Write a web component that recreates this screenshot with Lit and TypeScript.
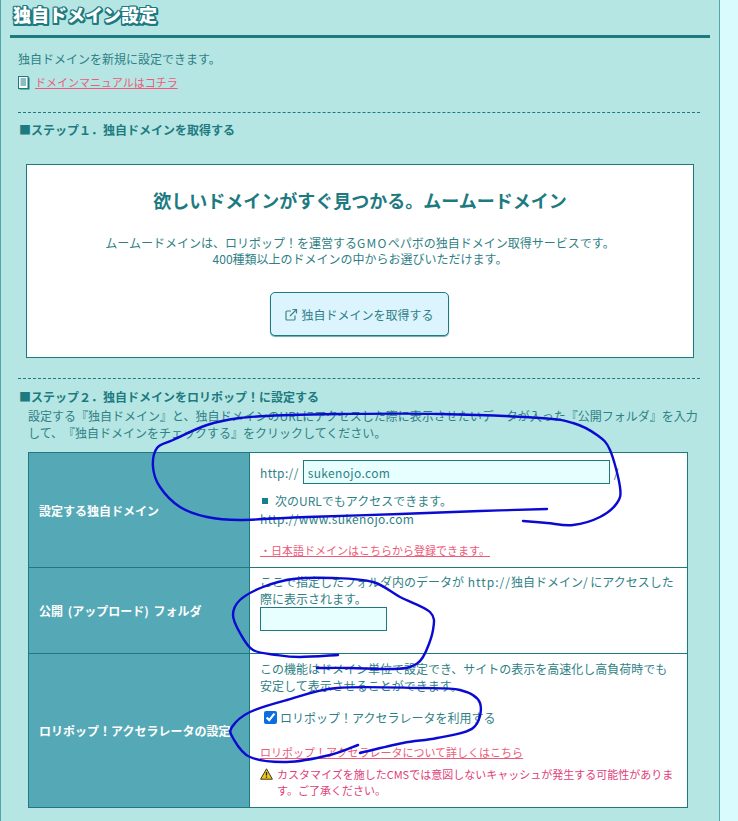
import { LitElement, html, css, svg } from "lit";
import { customElement } from "lit/decorators.js";

function smooth(p: number[][]): string {
  let d = `M${p[0][0]} ${p[0][1]}`;
  for (let i = 0; i < p.length - 1; i++) {
    const a = p[Math.max(i - 1, 0)], b = p[i], c = p[i + 1], e = p[Math.min(i + 2, p.length - 1)];
    const c1 = [b[0] + (c[0] - a[0]) / 6, b[1] + (c[1] - a[1]) / 6];
    const c2 = [c[0] - (e[0] - b[0]) / 6, c[1] - (e[1] - b[1]) / 6];
    d += ` C${c1[0].toFixed(1)} ${c1[1].toFixed(1)} ${c2[0].toFixed(1)} ${c2[1].toFixed(1)} ${c[0]} ${c[1]}`;
  }
  return d;
}

const scribbles: number[][][] = [
  [[547,509],[480,511],[400,514],[307,517],[240,520],[207,517],[180,507],[160,487],[153,467],[157,448],[173,440],[207,425],[240,418],[290,415],[340,414],[440,414],[540,418],[573,423],[597,435],[610,450],[620,487],[617,503],[600,517],[573,525],[547,523],[523,521]],
  [[338,655],[300,657],[277,655],[253,650],[240,633],[233,615],[240,600],[263,587],[293,579],[333,578],[373,582],[400,597],[430,612],[433,630],[423,657],[410,667],[390,669],[350,668],[317,668]],
  [[358,745],[330,755],[287,762],[250,757],[233,738],[232,727],[250,712],[287,700],[337,688],[420,688],[460,690],[480,703],[473,728],[437,738],[403,743],[360,753]],
];

@customElement("app-root")
export class AppRoot extends LitElement {
  static styles = css`
    :host { display: block; width: 738px; height: 821px; overflow: hidden; position: relative; background: #d9fbfd; font-family: "Noto Sans CJK JP", "Noto Sans", sans-serif; font-size: 12px; line-height: 17px; color: #2f7f86; text-spacing-trim: space-all; }
    a { color: #ee5a78; text-decoration: underline; font-size: 11px; }
    .panel { box-sizing: border-box; width: 720px; height: 821px; background: #b5e6e3; border-left: 1px solid #4fa6ab; border-right: 1px solid #4fa6ab; padding-top: 3px; }
    h1 { margin: 0 0 0 12px; font-size: 18px; line-height: 23px; font-weight: 900; color: #fff; text-shadow: 1px 0 0 #1d7a80, -1px 0 0 #1d7a80, 0 1px 0 #1d7a80, 0 -1px 0 #1d7a80, 1px 1px 0 #1d7a80, -1px -1px 0 #1d7a80, 1px -1px 0 #1d7a80, -1px 1px 0 #1d7a80, 2px 0 0 #1d7a80, 0 2px 0 #1d7a80, 2px 2px 0 #1d7a80, 2px 1px 0 #1d7a80, 1px 2px 0 #1d7a80, -1px 2px 0 #1d7a80; }
    .rule { height: 3px; background: #1d7a80; margin: 9px 9px 0 9px; }
    .intro { margin: 12px 0 0 17px; }
    .manual { display: flex; align-items: center; gap: 5px; margin: 7px 0 0 17px; }
    .manual svg { display: block; }
    .dash { border-top: 1px dashed #1d7a80; margin-left: 17px; width: 682px; }
    .dash.first { margin-top: 21px; }
    .dash.second { margin-top: 20px; }
    h2 { margin: 8px 0 0 18px; font-size: 12px; line-height: 17px; font-weight: 700; color: #1d7a80; }
    h2.s2 { margin-top: 9px; }
    .promo { box-sizing: border-box; width: 668px; height: 194px; margin: 26px 0 0 25px; background: #fff; border: 1px solid #1d7a80; text-align: center; padding-top: 22px; }
    .promo h3 { margin: 0; font-size: 18px; line-height: 26px; font-weight: 700; color: #1d7a80; }
    .promo p { margin: 22px 0 0; line-height: 16px; }
    .gmo { letter-spacing: 1.3px; }
    .btn { box-sizing: border-box; display: inline-flex; align-items: center; justify-content: center; gap: 3px; width: 179px; height: 44px; margin: 25px 1px 0 0; background: #dbf4fd; border: 1px solid #1d7a80; border-radius: 5px; box-shadow: 0 1px 1px #6aa9ad; color: #2f7f86; font-size: 12px; }
    .desc { margin: 2px 0 0 27px; width: 680px; }
    table { border-collapse: collapse; table-layout: fixed; width: 660px; margin: 11px 0 0 27px; }
    th, td { border: 1px solid #1d7a80; padding: 0; font-size: 12px; line-height: 17px; }
    th { width: 221px; background: #55a9b6; color: #fff; font-weight: 700; text-align: left; padding-left: 10px; box-sizing: border-box; }
    th.wide { word-spacing: 2px; }
    td { background: #fff; padding-left: 10px; padding-right: 10px; vertical-align: top; }
    .r1 { height: 115px; } .r2 { height: 86px; } .r3 { height: 154px; }
    .url { display: flex; align-items: center; gap: 4px; margin-top: 7px; }
    .latin { letter-spacing: 0.35px; }
    .http { letter-spacing: 1px; }
    input[type="text"] { box-sizing: border-box; margin: 0; padding: 0 4px; border: 1px solid #1d7a80; background: #e8ffff; color: #2f7f86; font: inherit; letter-spacing: 0.35px; border-radius: 0; outline: none; }
    .dom { width: 307px; height: 24px; }
    .folder { display: block; width: 127px; height: 24px; margin-top: 27px; }
    .also { margin-top: 8px; display: flex; align-items: center; gap: 7px; padding-left: 2px; }
    .sq { width: 6px; height: 6px; background: #14808f; }
    .www { margin-top: 1px; }
    .jp { display: block; margin-top: 15px; }
    .first-line { margin-top: 5px; }
    .first-line.r3l { margin-top: 6px; }
    .check { display: flex; align-items: center; gap: 3px; margin: 15px 0 0 4px; }
    .check input { margin: 0; width: 13px; height: 13px; accent-color: #0a6ee0; }
    .accel { display: block; margin-top: 18px; }
    .warn { display: flex; gap: 4px; margin-top: 5px; color: #e0407a; font-size: 11px; line-height: 16px; }
    .warn svg { flex: none; margin-top: 2px; }
    .warn span { display: block; }
    .ink { position: absolute; left: 0; top: 0; width: 738px; height: 821px; pointer-events: none; }
    .ink path { fill: none; stroke: #0a0ad2; stroke-width: 2.4; stroke-linecap: round; stroke-linejoin: round; }
  `;

  render() {
    return html`
      <div class="panel">
        <h1>独自ドメイン設定</h1>
        <div class="rule"></div>
        <div class="intro">独自ドメインを新規に設定できます。</div>
        <div class="manual">
          <svg width="12" height="14" viewBox="0 0 12 14"><rect x="1.5" y="1.5" width="10" height="12" fill="#1d7a80"/><rect x="0.5" y="0.5" width="9.5" height="12" fill="#fff" stroke="#1d7a80"/><path d="M2.5 3h5.5M2.5 5h5.5M2.5 7h5.5M2.5 9h5.5" stroke="#1d7a80" stroke-width="1"/></svg>
          <a href="#">ドメインマニュアルはコチラ</a>
        </div>
        <div class="dash first"></div>
        <h2>■ステップ１．独自ドメインを取得する</h2>
        <div class="promo">
          <h3>欲しいドメインがすぐ見つかる。ムームードメイン</h3>
          <p>ムームードメインは、ロリポップ！を運営する<span class="gmo">GMO</span>ペパボの独自ドメイン取得サービスです。<br>400種類以上のドメインの中からお選びいただけます。</p>
          <div class="btn">
            <svg width="13" height="13" viewBox="0 0 13 13" fill="none" stroke="#3f8389" stroke-width="1.2"><path d="M10 7.5V11a1 1 0 0 1-1 1H2a1 1 0 0 1-1-1V4a1 1 0 0 1 1-1h4"/><path d="M5 8l6-6M7.5 1.5H11.5V5.5"/></svg>
            <span>独自ドメインを取得する</span>
          </div>
        </div>
        <div class="dash second"></div>
        <h2 class="s2">■ステップ２．独自ドメインをロリポップ！に設定する</h2>
        <div class="desc">設定する『独自ドメイン』と、独自ドメインのURLにアクセスした際に表示させたいデータが入った『公開フォルダ』を入力して、『独自ドメインをチェックする』をクリックしてください。</div>
        <table>
          <tr class="r1">
            <th>設定する独自ドメイン</th>
            <td>
              <div class="url"><span class="latin">http://</span><input class="dom" type="text" .value=${"sukenojo.com"}><span>/</span></div>
              <div class="also"><span class="sq"></span><span>次のURLでもアクセスできます。</span></div>
              <div class="www latin">http://www.sukenojo.com</div>
              <a class="jp" href="#">・日本語ドメインはこちらから登録できます。</a>
            </td>
          </tr>
          <tr class="r2">
            <th class="wide">公開 (アップロード) フォルダ</th>
            <td>
              <div class="first-line">ここで指定したフォルダ内のデータが<span class="http"> http://</span>独自ドメイン/ にアクセスした際に表示されます。</div>
              <input class="folder" type="text">
            </td>
          </tr>
          <tr class="r3">
            <th>ロリポップ！アクセラレータの設定</th>
            <td>
              <div class="first-line r3l">この機能はドメイン単位で設定でき、サイトの表示を高速化し高負荷時でも安定して表示させることができます。</div>
              <label class="check"><input type="checkbox" checked><span>ロリポップ！アクセラレータを利用する</span></label>
              <a class="accel" href="#">ロリポップ！アクセラレータについて詳しくはこちら</a>
              <div class="warn">
                <svg width="13" height="12" viewBox="0 0 13 12"><path d="M6.5 0.8L12.4 11.2H0.6Z" fill="#f5c518" stroke="#3a3a20" stroke-width="1" stroke-linejoin="round"/><path d="M6.5 4v3.6M6.5 8.6v1.2" stroke="#222" stroke-width="1.3"/></svg>
                <span>カスタマイズを施したCMSでは意図しないキャッシュが発生する可能性があります。ご了承ください。</span>
              </div>
            </td>
          </tr>
        </table>
      </div>
      <svg class="ink" viewBox="0 0 738 821">
        ${scribbles.map((p) => svg`<path d=${smooth(p)}></path>`)}
      </svg>
    `;
  }
}
